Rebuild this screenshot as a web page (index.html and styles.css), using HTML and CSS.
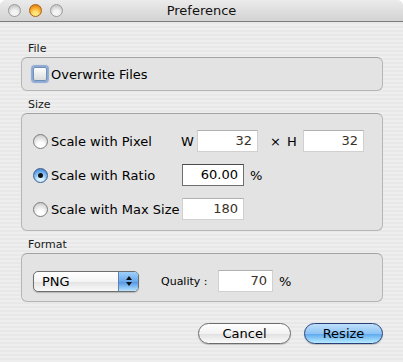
FILE: index.html
```html
<!DOCTYPE html>
<html lang="en">

<head>
  <meta charset="UTF-8">
  <meta name="viewport" content="width=device-width, initial-scale=1.0">
  <title>Preference</title>
  <link rel="stylesheet" href="styles.css">
</head>

<body>
  <div class="window">
    <div class="titlebar">
      <div class="lights">
        <span class="light"></span>
        <span class="light active"></span>
        <span class="light"></span>
      </div>
      <div class="title">Preference</div>
    </div>

    <div class="content">
      <div class="group_label">File</div>
      <div class="group group_file">
        <label class="check_row">
          <span class="checkbox"></span>
          <span>Overwrite Files</span>
        </label>
      </div>

      <div class="group_label">Size</div>
      <div class="group group_size">
        <div class="size_row">
          <span class="radio"></span>
          <span class="radio_label">Scale with Pixel</span>
          <span class="axis">W</span>
          <span class="field dim w_field">32</span>
          <span class="times">×</span>
          <span class="axis">H</span>
          <span class="field dim w_field">32</span>
        </div>
        <div class="size_row">
          <span class="radio checked"></span>
          <span class="radio_label">Scale with Ratio</span>
          <span class="field ratio_field">60.00</span>
          <span class="unit">%</span>
        </div>
        <div class="size_row">
          <span class="radio"></span>
          <span class="radio_label">Scale with Max Size</span>
          <span class="field dim max_field">180</span>
        </div>
      </div>

      <div class="group_label">Format</div>
      <div class="group group_format">
        <div class="popup">
          <span class="popup_text">PNG</span>
          <span class="popup_arrows">
            <svg width="8" height="12" viewBox="0 0 8 12">
              <path d="M4 1 L7 5 L1 5 Z" fill="#111" />
              <path d="M4 11 L7 7 L1 7 Z" fill="#111" />
            </svg>
          </span>
        </div>
        <span class="quality_label">Quality :</span>
        <span class="field dim quality_field">70</span>
        <span class="unit">%</span>
      </div>

      <div class="buttons">
        <div class="btn">Cancel</div>
        <div class="btn btn_default">Resize</div>
      </div>
    </div>
  </div>
</body>

</html>
```

FILE: styles.css
```css
body {
  margin: 0;
  background: #ffffff;
  font-family: "DejaVu Sans", "Liberation Sans", sans-serif;
  color: #000;
}

.window {
  width: 403px;
  height: 362px;
  border-radius: 6px 6px 0 0;
  overflow: hidden;
  background: repeating-linear-gradient(#eeeeee 0 2px, #e8e8e8 2px 4px);
}

.titlebar {
  height: 21px;
  border-bottom: 1px solid #7c7c7c;
  background: linear-gradient(#ebebeb, #d3d3d3);
  display: flex;
  align-items: center;
  position: relative;
}

.lights {
  display: flex;
  gap: 8px;
  padding-left: 8px;
}

.light {
  width: 13px;
  height: 13px;
  border-radius: 50%;
  box-sizing: border-box;
  border: 1px solid #9a9a9a;
  background: radial-gradient(circle at 50% 75%, #f4f4f4 0 30%, #cfcfcf 70%, #b8b8b8 100%);
}

.light.active {
  border-color: #a8621a;
  background: radial-gradient(circle at 50% 80%, #ffe680 0 20%, #f8a324 60%, #c96a10 100%);
}

.title {
  position: absolute;
  left: 0;
  right: 0;
  text-align: center;
  font-size: 13px;
  line-height: 21px;
  color: #111;
}

.content {
  padding: 20px 20px 0 21px;
}

.group_label {
  font-size: 11px;
  line-height: 14px;
  height: 14px;
  margin-left: 7px;
  margin-bottom: 1px;
  color: #1a1a1a;
}

.group {
  box-sizing: border-box;
  width: 362px;
  border: 1px solid #b6b6b6;
  border-top-color: #a2a2a2;
  border-radius: 6px;
  background: #e3e3e3;
  font-size: 13px;
}

.group_file {
  height: 34px;
  display: flex;
  align-items: center;
  padding-left: 11px;
  margin-bottom: 7px;
}

.check_row {
  display: flex;
  align-items: center;
  gap: 4px;
}

.checkbox {
  width: 14px;
  height: 14px;
  box-sizing: border-box;
  border: 1px solid #6f8fb8;
  border-radius: 2px;
  background: linear-gradient(#ffffff, #dcdcdc);
  box-shadow: 0 0 1px 2px rgba(110, 150, 205, 0.75);
}

.group_size {
  height: 118px;
  padding-top: 10px;
  padding-left: 11px;
  margin-bottom: 7px;
}

.size_row {
  height: 34px;
  display: flex;
  align-items: center;
}

.radio {
  width: 15px;
  height: 15px;
  box-sizing: border-box;
  border-radius: 50%;
  border: 1px solid #7d7d7d;
  background: radial-gradient(circle at 50% 80%, #ffffff 0 25%, #dedede 65%, #bcbcbc 100%);
  display: flex;
  align-items: center;
  justify-content: center;
}

.radio.checked {
  border-color: #3f5f8e;
  background: radial-gradient(circle at 50% 80%, #d6f0ff 0 20%, #6fb1ee 60%, #2f6fc0 100%);
}

.radio.checked::after {
  content: "";
  width: 5px;
  height: 5px;
  border-radius: 50%;
  background: #111;
}

.radio_label {
  width: 130px;
  padding-left: 3px;
}

.axis {
  width: 16px;
}

.times {
  width: 19px;
  text-align: center;
  margin-left: 8px;
  margin-right: 2px;
}

.field {
  box-sizing: border-box;
  height: 22px;
  line-height: 20px;
  background: #ffffff;
  border: 1px solid #b4b4b4;
  border-top-color: #8e8e8e;
  text-align: right;
  padding-right: 5px;
}

.field.dim {
  border-color: #d0d0d0;
  border-top-color: #b0b0b0;
  color: #3a3028;
}

.w_field {
  width: 61px;
}

.ratio_field {
  width: 62px;
  margin-left: 1px;
  border-color: #6e6e6e;
  border-top-color: #4a4a4a;
}

.max_field {
  width: 62px;
  margin-left: 1px;
}

.unit {
  margin-left: 6px;
}

.group_format {
  height: 49px;
  display: flex;
  align-items: center;
  padding-left: 11px;
  padding-top: 7px;
}

.popup {
  box-sizing: border-box;
  width: 106px;
  height: 21px;
  border: 1px solid #6e6e6e;
  border-radius: 5px;
  background: linear-gradient(#ffffff, #f4f4f4 50%, #e2e2e2 51%, #fafafa);
  display: flex;
  overflow: hidden;
  box-shadow: 0 1px 1px rgba(0, 0, 0, 0.2);
}

.popup_text {
  flex: 1;
  padding-left: 8px;
  line-height: 19px;
}

.popup_arrows {
  width: 19px;
  border-left: 1px solid #5f7fae;
  background: linear-gradient(#9fd0fb, #6aa9eb 50%, #4d92e4 51%, #b7e4ff);
  display: flex;
  align-items: center;
  justify-content: center;
}

.quality_label {
  font-size: 11px;
  margin-left: 22px;
  width: 57px;
}

.quality_field {
  width: 55px;
}

.buttons {
  display: flex;
  justify-content: flex-end;
  gap: 13px;
  margin-top: 21px;
  padding-right: 0;
}

.btn {
  box-sizing: border-box;
  height: 21px;
  width: 93px;
  border-radius: 11px;
  border: 1px solid #6c6c6c;
  background: linear-gradient(#ffffff, #f2f2f2 50%, #e0e0e0 51%, #fbfbfb);
  text-align: center;
  font-size: 13px;
  line-height: 19px;
  box-shadow: 0 1px 1px rgba(0, 0, 0, 0.2);
}

.btn_default {
  width: 79px;
  border-color: #2a3f7a;
  background: linear-gradient(#bfe0fb, #8ec4f5 50%, #5aa6ee 51%, #b8ecff);
}
```
